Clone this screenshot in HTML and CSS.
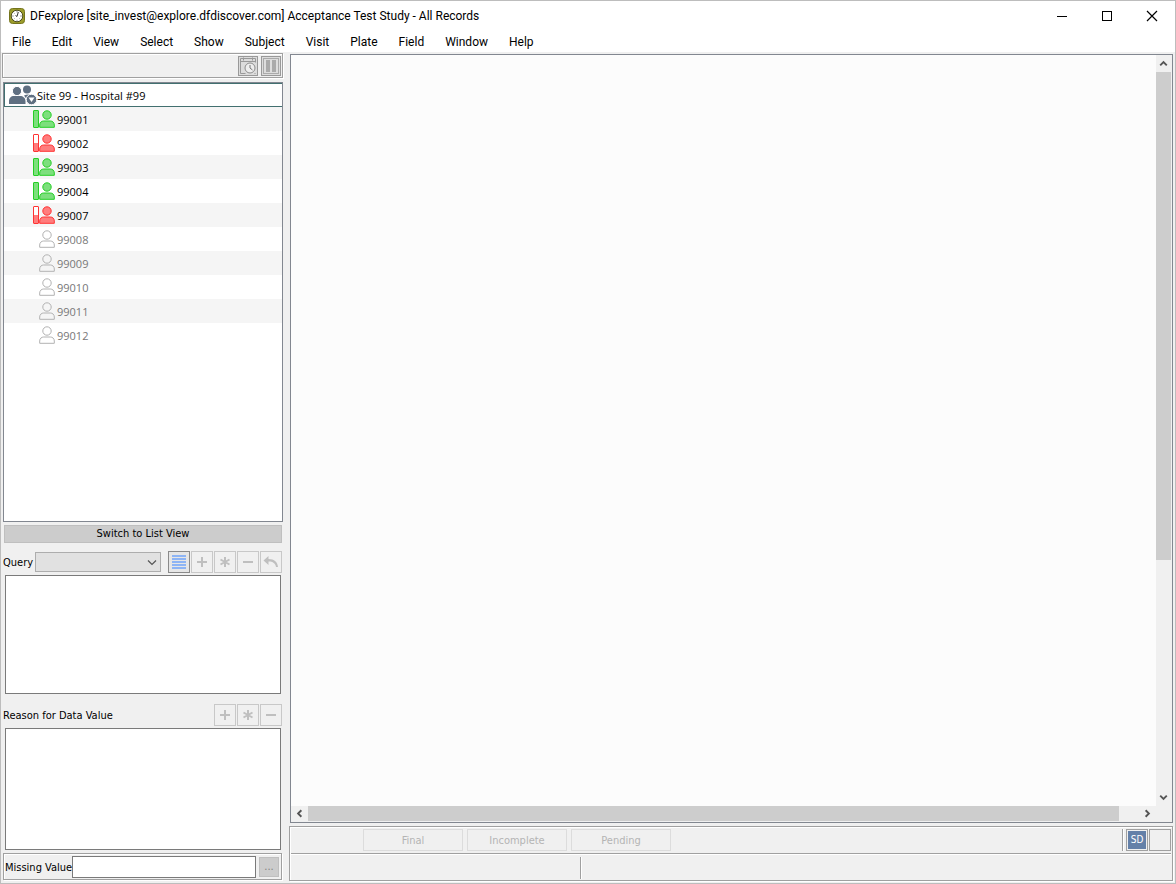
FILE: index.html
```html
<!DOCTYPE html>
<html lang="en">
<head>
    <meta charset="UTF-8">
    <meta name="viewport" content="width=device-width, initial-scale=1.0">
    <title>DFexplore</title>
    <link rel="stylesheet" href="styles.css">
</head>
<body>
    <!-- shared icons -->
    <svg class="defs" width="0" height="0">
        <symbol id="person" viewBox="0 0 16 18">
            <circle cx="8" cy="5" r="4.200"/>
            <path d="M.7 17.300v-2.300c0-2.500 1.800-4 4-4h6.600c2.200 0 4 1.500 4 4v2.300z"/>
        </symbol>
        <symbol id="plus" viewBox="0 0 20 20"><path d="M5 10h10M10 5v10" stroke="#bfbfbf" stroke-width="2"/></symbol>
        <symbol id="star" viewBox="0 0 20 20"><path d="M10 5v10M5.500 7.500l9 5M14.500 7.500l-9 5" stroke="#bfbfbf" stroke-width="2"/></symbol>
        <symbol id="minus" viewBox="0 0 20 20"><path d="M5 10h10" stroke="#bfbfbf" stroke-width="2"/></symbol>
        <symbol id="arrow" viewBox="0 0 16 16"><path d="M4.500 10L8 6.500l3.500 3.500" fill="none" stroke="#555" stroke-width="2"/></symbol>
    </svg>

    <header class="titlebar">
        <svg class="logo" width="16" height="16" viewBox="0 0 16 16">
            <rect x=".5" y=".5" width="15" height="15" rx="3" fill="#9c9c2c" stroke="#74741c"/>
            <circle cx="8" cy="8" r="5.800" fill="#fff" stroke="#4c4c20"/>
            <path d="M8 3v1.500M3.200 8h1.500M11.300 8h1.500M8 11.800v1M4.800 4.800l.7.7M4.800 11.200l.7-.7M11.200 11.200l-.7-.7" stroke="#888"/>
            <path d="M9.300 4L8 8.500 6.500 7.500" fill="none" stroke="#333"/>
        </svg>
        <h1>DFexplore [site_invest@explore.dfdiscover.com] Acceptance Test Study - All Records</h1>
        <div class="win-btns">
            <button aria-label="Minimize"><svg width="12" height="12"><path d="M1 6.500h10" stroke="#000"/></svg></button>
            <button aria-label="Maximize"><svg width="12" height="12"><rect x="1.500" y="1.500" width="9" height="9" fill="none" stroke="#000"/></svg></button>
            <button aria-label="Close"><svg width="12" height="12"><path d="M1 1l10 10M11 1L1 11" stroke="#000" stroke-width="1.200"/></svg></button>
        </div>
    </header>
    <nav class="menubar">
        <button>File</button>
        <button>Edit</button>
        <button>View</button>
        <button>Select</button>
        <button>Show</button>
        <button>Subject</button>
        <button>Visit</button>
        <button>Plate</button>
        <button>Field</button>
        <button>Window</button>
        <button>Help</button>
    </nav>

    <div class="content">
        <aside class="side">
            <div class="toolbar">
                <button aria-label="Schedule">
                    <svg width="20" height="20" viewBox="0 0 20 20" fill="none" stroke="#999">
                        <rect x=".5" y=".5" width="19" height="19"/>
                        <path d="M2.500 17.500v-15h15v4M2.500 5.500h15M2.500 17.500h5M17.500 17.500h-1M5.500 1.500v3M14.500 1.500v3"/>
                        <circle cx="12" cy="12" r="5" fill="#eee" stroke="#8c8c8c"/>
                        <path d="M12 9v3l2.500 2" stroke="#777"/>
                    </svg>
                </button>
                <button aria-label="Columns">
                    <svg width="20" height="20" viewBox="0 0 20 20" fill="none" stroke="#999">
                        <rect x=".5" y=".5" width="19" height="19"/>
                        <rect x="2.500" y="2.500" width="15" height="15" stroke="#aaa" fill="#ddd"/>
                        <path d="M7 4v12M13 4v12" stroke="#aaa" stroke-width="4"/>
                    </svg>
                </button>
            </div>

            <ul class="tree">
                <li class="site">
                    <svg width="28" height="20" viewBox="0 0 28 20" fill="#5f6f81">
                        <circle cx="18" cy="4.500" r="4"/>
                        <path d="M15 10.500c5-2 9-.5 9.500 3.500h-7z"/>
                        <circle cx="8" cy="6" r="4.600" stroke="#fff"/>
                        <path d="M0 19v-3c0-3 2-5 5-5h6c3 0 5.500 2 5.500 5v3z"/>
                        <circle cx="22.500" cy="14.500" r="5.300" stroke="#fff"/>
                        <path d="M19.500 12.500h6l-3 4.500z" fill="#fff"/>
                    </svg>
                    <span>Site 99 - Hospital #99</span>
                </li>
                <li class="full"><i class="bar"></i><svg class="icon"><use href="#person"/></svg><span>99001</span></li>
                <li class="part"><i class="bar"></i><svg class="icon"><use href="#person"/></svg><span>99002</span></li>
                <li class="full"><i class="bar"></i><svg class="icon"><use href="#person"/></svg><span>99003</span></li>
                <li class="full"><i class="bar"></i><svg class="icon"><use href="#person"/></svg><span>99004</span></li>
                <li class="part"><i class="bar"></i><svg class="icon"><use href="#person"/></svg><span>99007</span></li>
                <li class="none"><i class="bar"></i><svg class="icon"><use href="#person"/></svg><span>99008</span></li>
                <li class="none"><i class="bar"></i><svg class="icon"><use href="#person"/></svg><span>99009</span></li>
                <li class="none"><i class="bar"></i><svg class="icon"><use href="#person"/></svg><span>99010</span></li>
                <li class="none"><i class="bar"></i><svg class="icon"><use href="#person"/></svg><span>99011</span></li>
                <li class="none"><i class="bar"></i><svg class="icon"><use href="#person"/></svg><span>99012</span></li>
            </ul>

            <button class="switch">Switch to List View</button>

            <div class="row">
                <label for="query">Query</label>
                <div class="combo">
                    <select id="query" disabled></select>
                    <svg width="10" height="6"><path d="M1 .5l4 4 4-4" fill="none" stroke="#555" stroke-width="1.200"/></svg>
                </div>
                <div class="tools">
                    <button class="on" aria-label="List queries"><svg viewBox="0 0 20 20"><path d="M3 4h14M3 7h14M3 10h14M3 13h14M3 16h14" stroke="#8db4f5" stroke-width="2"/></svg></button>
                    <button disabled aria-label="Add query"><svg><use href="#plus"/></svg></button>
                    <button disabled aria-label="Edit query"><svg><use href="#star"/></svg></button>
                    <button disabled aria-label="Delete query"><svg><use href="#minus"/></svg></button>
                    <button disabled aria-label="Reply"><svg viewBox="0 0 20 20"><path d="M7.500 4v3c6 0 9 3 9.500 8h-2c-.5-3.500-3-5.500-7.500-5.500v3.500L2.500 8.500z" fill="#bfbfbf"/></svg></button>
                </div>
            </div>
            <textarea class="query-text" aria-label="Query text"></textarea>

            <div class="row reason">
                <label for="reason">Reason for Data Value</label>
                <div class="tools">
                    <button disabled aria-label="Add reason"><svg><use href="#plus"/></svg></button>
                    <button disabled aria-label="Edit reason"><svg><use href="#star"/></svg></button>
                    <button disabled aria-label="Delete reason"><svg><use href="#minus"/></svg></button>
                </div>
            </div>
            <textarea class="reason-text" id="reason"></textarea>

            <div class="missing">
                <label for="missing">Missing Value</label>
                <input type="text" id="missing">
                <button disabled>...</button>
            </div>
        </aside>

        <main class="main">
            <div class="view">
                <div class="page"></div>
                <div class="vscroll">
                    <button aria-label="Scroll up"><svg><use href="#arrow"/></svg></button>
                    <div class="track"><div class="thumb"></div></div>
                    <button class="down" aria-label="Scroll down"><svg><use href="#arrow"/></svg></button>
                </div>
                <div class="hscroll">
                    <button class="left" aria-label="Scroll left"><svg><use href="#arrow"/></svg></button>
                    <div class="track"><div class="thumb"></div></div>
                    <button class="right" aria-label="Scroll right"><svg><use href="#arrow"/></svg></button>
                </div>
            </div>
            <footer class="status">
                <div class="levels">
                    <button disabled>Final</button>
                    <button disabled>Incomplete</button>
                    <button disabled>Pending</button>
                    <div class="modes">
                        <button><b>SD</b></button>
                        <button aria-label="Mode"></button>
                    </div>
                </div>
                <div class="messages">
                    <p></p>
                    <p></p>
                </div>
            </footer>
        </main>
    </div>
</body>
</html>
```
FILE: styles.css
```css
*{
    margin: 0;
    padding: 0;
    box-sizing: border-box;
}
body{
    display: flex;
    flex-direction: column;
    height: 100vh;
    border: 1px solid #bdbdbd;
    background: #f0f0f0;
    color: #000;
    font: 11px/14px "DejaVu Sans Condensed", "DejaVu Sans", sans-serif;
    overflow: hidden;
}
ul{
    list-style: none;
}
button,input,select,textarea{
    font: inherit;
    color: inherit;
    border: none;
    border-radius: 0;
    background: none;
}
svg{
    display: block;
    flex: none;
}
.defs{
    position: absolute;
}

/* title and menus */
.titlebar{
    display: flex;
    align-items: center;
    height: 29px;
    padding-left: 8px;
    background: #fff;
}
.titlebar h1{
    flex: 1;
    margin-left: 5px;
    font: 12px/16px Roboto, sans-serif;
    white-space: nowrap;
}
.win-btns{
    display: flex;
    margin-right: 1px;
}
.win-btns button{
    width: 45px;
    height: 28px;
}
.win-btns svg{
    margin: 0 auto;
}
.menubar{
    display: flex;
    gap: 1px;
    height: 22px;
    padding-left: 1px;
    background: #fff;
}
.menubar button{
    padding: 2px 10px 0;
    font: 12px/20px Roboto, sans-serif;
}

.content{
    flex: 1;
    display: flex;
    min-height: 0;
    padding: 1px 2px 2px 1px;
}

/* left panel */
.side{
    display: flex;
    flex-direction: column;
    width: 281px;
    margin: 0 6px 1px 0;
}
.toolbar{
    display: flex;
    justify-content: flex-end;
    gap: 3px;
    height: 25px;
    padding: 2px 1px;
    border: 1px solid #a0a0a0;
    box-shadow: inset 1px 1px #fff, 1px 1px #fff;
}
.toolbar button{
    width: 20px;
    height: 20px;
    background: #dcdcdc;
}
.tree{
    flex: 1;
    margin: 4px 0 3px 1px;
    border: 1px solid #828790;
    background: #fff;
    font-family: "Open Sans", sans-serif;
}
.tree li{
    display: flex;
    align-items: center;
    height: 24px;
    padding-left: 29px;
}
.tree li:nth-child(even){
    background: #f5f5f5;
}
.tree li.site{
    padding-left: 4px;
    border: 1px solid #427070;
    border-right: none;
}
.tree span{
    padding-top: 1px;
}
.icon{
    width: 16px;
    height: 18px;
    margin-right: 2px;
    fill: #7ddf7d;
    stroke: #25cf25;
}
.bar{
    width: 6px;
    height: 18px;
    border: 1px solid #25cf25;
    border-radius: 1px;
    background: #7ddf7d;
}
.part .bar{
    border-color: #f33;
    background: linear-gradient(#fff 50%, #ff7d7d 50%);
}
.part .icon{
    fill: #ff7d7d;
    stroke: #f33;
}
.none .bar{
    visibility: hidden;
}
.none .icon{
    fill: none;
    stroke: #b2b2b2;
}
.none span{
    color: #787878;
}
.switch{
    height: 18px;
    margin: 0 1px 0 2px;
    border: 1px solid #bfbfbf;
    background: #ccc;
    line-height: 16px;
}
.row{
    display: flex;
    align-items: center;
    height: 22px;
    margin: 8px 1px 2px;
}
.row label,.missing label{
    padding-top: 2px;
}
.reason{
    margin-top: 10px;
}
.combo{
    position: relative;
    flex: 1;
    height: 20px;
    margin: 0 7px 0 2px;
}
.combo select{
    width: 100%;
    height: 20px;
    border: 1px solid #adadad;
    background: #e1e1e1;
    appearance: none;
    display: block;
    opacity: 1;
}
.combo svg{
    position: absolute;
    right: 4px;
    top: 8px;
    pointer-events: none;
}
.tools{
    display: flex;
    gap: 1px;
    margin-left: auto;
}
.tools button{
    width: 22px;
    height: 22px;
    border: 1px solid #c8c8c8;
}
.tools button.on{
    border-color: #8a8a8a;
    background: #e6e6e6;
}
.tools svg{
    width: 20px;
    height: 20px;
}
textarea{
    margin: 0 2px 0 3px;
    border: 1px solid #7a7a7a;
    background: #fff;
    resize: none;
}
.query-text{
    height: 119px;
}
.reason-text{
    height: 122px;
}
.missing{
    display: flex;
    align-items: center;
    height: 27px;
    margin: 3px 1px 0;
    padding: 0 2px 0 1px;
    border: 1px solid #a0a0a0;
    box-shadow: inset 1px 1px #fff, 1px 1px #fff;
}
.missing input{
    flex: 1;
    min-width: 0;
    height: 22px;
    margin-right: 3px;
    border: 1px solid #7a7a7a;
    background: #fff;
}
.missing button{
    width: 20px;
    height: 20px;
    border: 1px solid #bfbfbf;
    background: #ccc;
    color: #838383;
}

/* record view with its scroll bars */
.main{
    flex: 1;
    display: flex;
    flex-direction: column;
    min-width: 0;
}
.view{
    flex: 1;
    display: grid;
    grid-template: 1fr 15px / 1fr 15px;
    margin: 1px 0 3px 1px;
    padding: 0 1px 1px 0;
    border: 1px solid #828790;
}
.page{
    background: #fcfcfc;
}
.vscroll,.hscroll{
    display: flex;
}
.vscroll{
    flex-direction: column;
}
.view button{
    flex: none;
    width: 15px;
    height: 17px;
}
.hscroll button{
    width: 17px;
    height: 15px;
}
.view svg{
    width: 15px;
    height: 15px;
    margin: 0 auto;
}
.down svg{
    transform: rotate(180deg);
}
.left svg{
    transform: rotate(-90deg);
}
.right svg{
    transform: rotate(90deg);
}
.track{
    flex: 1;
}
.thumb{
    background: #cdcdcd;
}
.vscroll .thumb{
    width: 15px;
    height: 68%;
}
.hscroll .thumb{
    width: calc(100% - 20px);
    height: 15px;
}

/* bottom strip */
.status{
    height: 55px;
    border: 1px solid #a0a0a0;
    box-shadow: inset 1px 1px #fff, 1px 1px #fff;
}
.levels{
    display: flex;
    gap: 4px;
    height: 27px;
    margin: 0 1px;
    padding: 2px 0 2px 72px;
    border-bottom: 1px solid #a0a0a0;
    box-shadow: 0 1px #fff;
}
.levels > button{
    width: 100px;
    height: 22px;
    padding-top: 2px;
    border: 1px solid #dcdcdc;
    color: #b4b4b4;
}
.modes{
    display: flex;
    gap: 1px;
    height: 22px;
    margin-left: auto;
    padding-left: 3px;
    border-left: 1px solid #a0a0a0;
    box-shadow: inset 1px 0 #fff;
}
.modes button{
    width: 22px;
    height: 22px;
    padding: 1px;
    border: 1px solid #a0a0a0;
}
.modes b{
    display: block;
    background: #6480a8;
    color: #fff;
    font-weight: normal;
    font-size: 10px;
    line-height: 18px;
}
.messages{
    display: flex;
    height: 26px;
    padding-top: 3px;
}
.messages p{
    flex: 2;
}
.messages p:first-child{
    flex: 0 0 33%;
    height: 22px;
    border-right: 1px solid #a0a0a0;
    box-shadow: 1px 0 #fff;
}
```
